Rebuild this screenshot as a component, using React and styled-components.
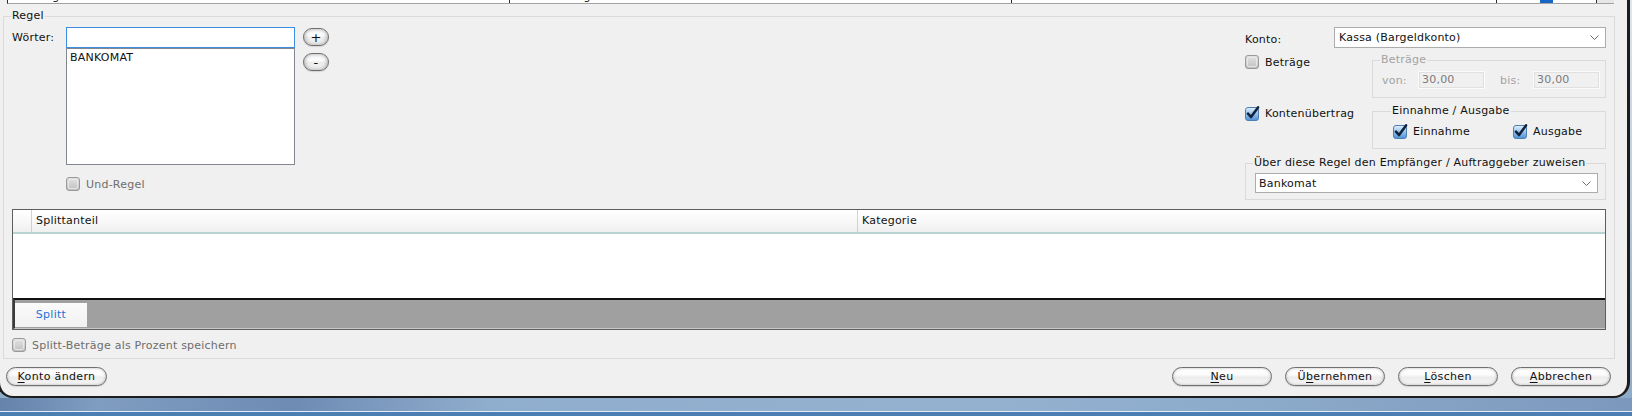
import React from "react";
import styled, { createGlobalStyle } from "styled-components";

const GlobalStyle = createGlobalStyle`
  html, body {
    margin: 0;
    padding: 0;
  }
  body {
    font-family: "DejaVu Sans", Verdana, sans-serif;
    font-size: 11px;
    letter-spacing: 0.22px;
    color: #111;
    overflow: hidden;
  }
`;

const Screen = styled.div`
  width: 1632px;
  height: 416px;
  display: flex;
  flex-direction: column;
  overflow: hidden;
  background: linear-gradient(180deg, #dfe6ee 0%, #b9cadb 50%, #8aa8c8 100%);
`;

const Window = styled.div`
  flex: none;
  margin-left: -3px;
  width: 1627px;
  height: 396px;
  background: #f0f0f0;
  border: 3px solid #1d1d1d;
  border-top: 0;
  border-bottom-width: 2px;
  border-radius: 0 0 16px 16px;
  display: flex;
  flex-direction: column;
`;

const Desktop = styled.div`
  flex: none;
  height: 13px;
  background: linear-gradient(90deg, #6583ab 0%, #7f9dc0 6%, #6e8bb4 18%, #8fadcc 30%, #94b2d0 60%, #8aa8c8 80%, #7d98bd 100%);
`;

const TaskLine = styled.div`
  flex: none;
  height: 1px;
  background: #e4edf5;
`;

const Taskbar = styled.div`
  flex: none;
  height: 4px;
  background: #4b7fb4;
`;

/* list row peeking in at the top */
const TopGrid = styled.div`
  flex: none;
  margin-left: 7px;
  width: 1606px;
  height: 3px;
  display: grid;
  grid-template-columns: 502px 502px 485px 100px 17px;
  background: #fff;
  border-left: 1px solid #2a2a2a;
  border-bottom: 1px solid #a3a3a3;
  overflow: hidden;
`;

const TopCell = styled.div`
  border-right: 1px solid ${(p) => (p.$last ? "transparent" : "#2a2a2a")};
  background: ${(p) => (p.$scroll ? "#e6e6e6" : "#fff")};
  padding-left: ${(p) => p.$pad || 3}px;
  overflow: hidden;
  white-space: nowrap;

  span {
    display: block;
    margin-top: -10px;
    line-height: 13px;
  }
`;

const Thumb = styled.div`
  width: 13px;
  height: 3px;
  background: #1566c4;
`;

const Group = styled.fieldset`
  margin: ${(p) => p.$margin || "0"};
  padding: ${(p) => p.$pad || "0"};
  border: 1px solid #dadada;
  min-width: 0;
`;

const Legend = styled.legend`
  padding: 0 1px;
  margin-left: ${(p) => p.$shift || "-2px"};
  line-height: 12px;
  color: ${(p) => (p.$disabled ? "#a3a3a3" : "#111")};
`;

const TopSection = styled.div`
  display: flex;
  justify-content: space-between;
  align-items: flex-start;
`;

const WordsArea = styled.div`
  display: grid;
  grid-template-columns: 54px 229px 34px;
  align-items: start;
`;

const FieldLabel = styled.div`
  padding-top: ${(p) => p.$top || 4}px;
  line-height: 13px;
  white-space: nowrap;
`;

const WordsStack = styled.div`
  display: flex;
  flex-direction: column;
`;

const TextInput = styled.div`
  height: 19px;
  border: 1px solid #3d8ee0;
  background: #fff;
`;

const ListBox = styled.div`
  height: 113px;
  border: 1px solid #828790;
  background: #fff;
  padding: 2px 3px 0;
  line-height: 13px;
`;

const SideButtons = styled.div`
  margin-left: 8px;
  padding-top: 1px;
  display: flex;
  flex-direction: column;
  gap: 7px;
`;

const PillButton = styled.button`
  flex: none;
  width: ${(p) => p.$w || 100}px;
  height: ${(p) => p.$h || 19}px;
  padding: 0;
  border: 1px solid #6f6f6f;
  border-radius: 10px;
  background: linear-gradient(180deg, #ffffff 0%, #fbfbfb 40%, #ececec 55%, #f6f6f6 100%);
  box-shadow: inset 0 0 ${(p) => (p.$small ? 4 : 3)}px rgba(0, 0, 0, ${(p) => (p.$small ? 0.38 : 0.28)}),
    0 1px 1px rgba(0, 0, 0, 0.12);
  font-family: inherit;
  font-size: ${(p) => (p.$small ? 13 : 11)}px;
  line-height: 1;
  color: #111;
  letter-spacing: 0.35px;
  display: flex;
  align-items: center;
  justify-content: center;

  u {
    text-decoration-thickness: 1px;
    text-underline-offset: 2px;
  }
`;

const CheckLine = styled.div`
  display: flex;
  align-items: center;
  gap: 5px;
  margin-top: ${(p) => p.$top || 0}px;
  width: ${(p) => (p.$w ? `${p.$w}px` : "auto")};
  flex: none;
  line-height: 13px;
  color: ${(p) => (p.$disabled ? "#6d6d6d" : "#111")};
  white-space: nowrap;

  svg {
    flex: none;
    display: block;
  }
`;

const RightBlock = styled.div`
  width: 361px;
  display: flex;
  flex-direction: column;
`;

const KontoRow = styled.div`
  display: grid;
  grid-template-columns: 89px 272px;
  align-items: center;
`;

const Select = styled.div`
  height: ${(p) => p.$h || 19}px;
  border: 1px solid #acacac;
  background: #fff;
  display: flex;
  align-items: center;
  justify-content: space-between;
  padding: 0 6px 0 ${(p) => p.$padl || 4}px;
  line-height: 13px;

  svg {
    display: block;
  }
`;

const OptionRow = styled.div`
  margin-top: ${(p) => p.$top}px;
  display: flex;
  align-items: flex-start;
`;

const OptionCheck = styled.div`
  width: 127px;
  flex: none;
  padding-top: ${(p) => p.$top || 1}px;
`;

const RangeGrid = styled.div`
  display: grid;
  grid-template-columns: 36px 67px 15px 33px 67px;
  align-items: center;
  color: #a3a3a3;
`;

const RangeInput = styled.div`
  grid-column: ${(p) => p.$col};
  height: 16px;
  border: 1px solid #fbfbfb;
  outline: 1px solid #e0e0e0;
  outline-offset: -2px;
  background: #f0f0f0;
  padding-left: 3px;
  line-height: 16px;
  color: #7a7a7a;
`;

const FlowChecks = styled.div`
  display: flex;
  align-items: center;
`;

const SplitGrid = styled.div`
  margin-top: 9px;
  height: 119px;
  border: 1px solid #5e5e5e;
  display: flex;
  flex-direction: column;
`;

const HeaderRow = styled.div`
  height: 22px;
  display: grid;
  grid-template-columns: 19px 826px 1fr;
  border-bottom: 2px solid #b9d2d2;
  background: linear-gradient(180deg, #ffffff 0%, #f7f7f7 60%, #efefef 100%);
`;

const HeaderCell = styled.div`
  border-right: 1px solid ${(p) => (p.$last ? "transparent" : "#c3d6d6")};
  padding-left: 4px;
  line-height: 22px;
  white-space: nowrap;
  overflow: hidden;
`;

const GridBody = styled.div`
  height: 64px;
  background: #fff;
`;

const TabBar = styled.div`
  flex: 1;
  background: #a0a0a0;
  border-top: 2px solid #111;
  border-left: 2px solid #3a3a3a;
  border-bottom: 1px solid #c9c9c9;
  padding-top: 3px;
  display: flex;
  align-items: flex-start;
`;

const Tab = styled.div`
  width: 72px;
  height: 24px;
  background: linear-gradient(180deg, #fbfbfb 0%, #f1f1f1 100%);
  color: #1f74d2;
  line-height: 24px;
  text-align: center;
  letter-spacing: 0.3px;
`;

const ButtonBar = styled.div`
  margin-top: 8px;
  padding: 0 16px 0 6px;
  display: flex;
  justify-content: space-between;
  align-items: center;
`;

const ButtonGroup = styled.div`
  display: flex;
  gap: 13px;
`;

function CheckBox({ checked }) {
  if (checked) {
    return (
      <svg width="15" height="15" viewBox="0 0 15 15">
        <defs>
          <linearGradient id="cbOn" x1="0" y1="0" x2="0" y2="1">
            <stop offset="0" stopColor="#e3f0fc" />
            <stop offset="0.45" stopColor="#9cc6ef" />
            <stop offset="1" stopColor="#4f8fd4" />
          </linearGradient>
        </defs>
        <rect x="0.5" y="1.5" width="13" height="13" rx="2.5" fill="url(#cbOn)" stroke="#4d7fb2" />
        <path d="M3 7.6 L6 11 L13 1.4" fill="none" stroke="#14233d" strokeWidth="2.6" strokeLinecap="round" strokeLinejoin="round" />
      </svg>
    );
  }
  return (
    <svg width="15" height="15" viewBox="0 0 15 15">
      <defs>
        <linearGradient id="cbOff" x1="0" y1="0" x2="0" y2="1">
          <stop offset="0" stopColor="#e2e2e2" />
          <stop offset="0.5" stopColor="#d2d2d2" />
          <stop offset="1" stopColor="#bdbdbd" />
        </linearGradient>
      </defs>
      <rect x="0.5" y="0.5" width="13" height="13" rx="2.5" fill="url(#cbOff)" stroke="#9a9a9a" />
      <rect x="2.5" y="2.5" width="9" height="9" rx="1.5" fill="none" stroke="#ececec" strokeOpacity="0.8" />
    </svg>
  );
}

function Chevron() {
  return (
    <svg width="9" height="5" viewBox="0 0 9 5">
      <path d="M0.5 0.5 L4.5 4.5 L8.5 0.5" fill="none" stroke="#6a6a6a" strokeWidth="1" />
    </svg>
  );
}

export default function App() {
  return (
    <>
      <GlobalStyle />
      <Screen>
        <Window>
          <TopGrid>
            <TopCell>
              <span>Und-Regel</span>
            </TopCell>
            <TopCell>
              <span>Beschreibung übernehmen</span>
            </TopCell>
            <TopCell>
              <span>Liste für Lastschriften durch</span>
            </TopCell>
            <TopCell $pad={43}>
              <Thumb />
            </TopCell>
            <TopCell $last $scroll />
          </TopGrid>

          <Group $margin="6px 12px 0 3px" $pad="5px 8px 5px 8px">
            <Legend $shift="-1px">Regel</Legend>
            <TopSection>
              <WordsArea>
                <FieldLabel>Wörter:</FieldLabel>
                <WordsStack>
                  <TextInput />
                  <ListBox>BANKOMAT</ListBox>
                  <CheckLine $top={12} $disabled>
                    <CheckBox />
                    Und-Regel
                  </CheckLine>
                </WordsStack>
                <SideButtons>
                  <PillButton $w={26} $h={18} $small>+</PillButton>
                  <PillButton $w={26} $h={18} $small>-</PillButton>
                </SideButtons>
              </WordsArea>

              <RightBlock>
                <KontoRow>
                  <FieldLabel $top={0}>Konto:</FieldLabel>
                  <Select>
                    Kassa (Bargeldkonto)
                    <Chevron />
                  </Select>
                </KontoRow>

                <OptionRow $top={6}>
                  <OptionCheck>
                    <CheckLine>
                      <CheckBox />
                      Beträge
                    </CheckLine>
                  </OptionCheck>
                  <Group $pad="5px 5px 8px 9px" style={{ flex: 1 }}>
                    <Legend $disabled>Beträge</Legend>
                    <RangeGrid>
                      <span>von:</span>
                      <RangeInput $col={2}>30,00</RangeInput>
                      <span style={{ gridColumn: 4 }}>bis:</span>
                      <RangeInput $col={5}>30,00</RangeInput>
                    </RangeGrid>
                  </Group>
                </OptionRow>

                <OptionRow $top={7}>
                  <OptionCheck $top={1}>
                    <CheckLine>
                      <CheckBox checked />
                      Kontenübertrag
                    </CheckLine>
                  </OptionCheck>
                  <Group $pad="7px 5px 9px 20px" style={{ flex: 1 }}>
                    <Legend>Einnahme / Ausgabe</Legend>
                    <FlowChecks>
                      <CheckLine $w={120}>
                        <CheckBox checked />
                        Einnahme
                      </CheckLine>
                      <CheckLine>
                        <CheckBox checked />
                        Ausgabe
                      </CheckLine>
                    </FlowChecks>
                  </Group>
                </OptionRow>

                <Group $margin="8px 0 0 0" $pad="4px 7px 6px 9px">
                  <Legend>Über diese Regel den Empfänger / Auftraggeber zuweisen</Legend>
                  <Select $h={18} $padl={3}>
                    Bankomat
                    <Chevron />
                  </Select>
                </Group>
              </RightBlock>
            </TopSection>

            <SplitGrid>
              <HeaderRow>
                <HeaderCell />
                <HeaderCell>Splittanteil</HeaderCell>
                <HeaderCell $last>Kategorie</HeaderCell>
              </HeaderRow>
              <GridBody />
              <TabBar>
                <Tab>Splitt</Tab>
              </TabBar>
            </SplitGrid>

            <CheckLine $top={8} $disabled>
              <CheckBox />
              Splitt-Beträge als Prozent speichern
            </CheckLine>
          </Group>

          <ButtonBar>
            <PillButton $w={101}>
              <span>
                <u>K</u>onto ändern
              </span>
            </PillButton>
            <ButtonGroup>
              <PillButton>
                <span>
                  <u>N</u>eu
                </span>
              </PillButton>
              <PillButton>
                <span>
                  Ü<u>b</u>ernehmen
                </span>
              </PillButton>
              <PillButton>
                <span>
                  <u>L</u>öschen
                </span>
              </PillButton>
              <PillButton>
                <span>
                  <u>A</u>bbrechen
                </span>
              </PillButton>
            </ButtonGroup>
          </ButtonBar>
        </Window>
        <Desktop />
        <TaskLine />
        <Taskbar />
      </Screen>
    </>
  );
}
